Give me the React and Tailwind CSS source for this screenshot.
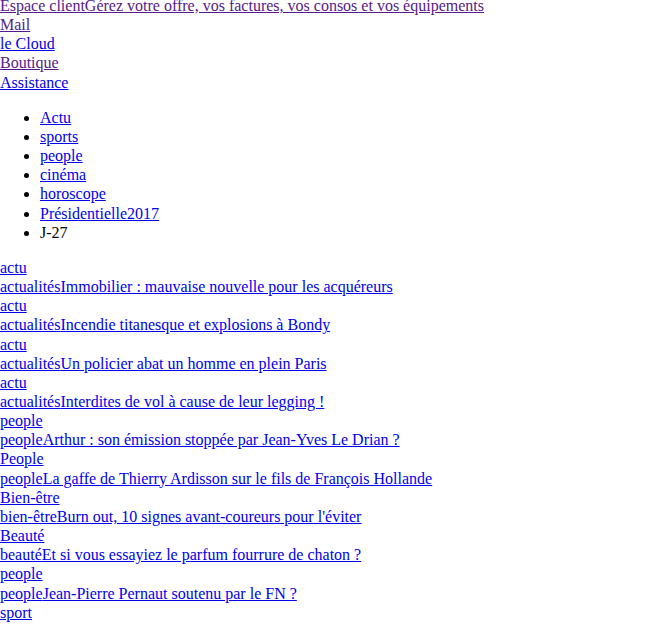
import React from 'react';

const visited = "text-[#551a8b]";
const link = "text-[#0000ee]";

const topLinks = [
  { label: "Mail", seen: true },
  { label: "le Cloud", seen: false },
  { label: "Boutique", seen: true },
  { label: "Assistance", seen: false },
];

const rubriques = ["Actu", "sports", "people", "cinéma", "horoscope", "Présidentielle2017"];

const articles = [
  ["actu", "actualités", "Immobilier : mauvaise nouvelle pour les acquéreurs"],
  ["actu", "actualités", "Incendie titanesque et explosions à Bondy"],
  ["actu", "actualités", "Un policier abat un homme en plein Paris"],
  ["actu", "actualités", "Interdites de vol à cause de leur legging !"],
  ["people", "people", "Arthur : son émission stoppée par Jean-Yves Le Drian ?"],
  ["People", "people", "La gaffe de Thierry Ardisson sur le fils de François Hollande"],
  ["Bien-être", "bien-être", "Burn out, 10 signes avant-coureurs pour l'éviter"],
  ["Beauté", "beauté", "Et si vous essayiez le parfum fourrure de chaton ?"],
  ["people", "people", "Jean-Pierre Pernaut soutenu par le FN ?"],
];

const App = () => {
  return (
    <div className="h-[625px] overflow-hidden bg-white text-black font-['Liberation_Serif','Times_New_Roman',serif] text-[16px] leading-[19.15px]">
      <div className="-mt-[4px]">
        {/* barre du haut */}
        <div>
          <a href="#" className={`underline ${visited}`}>
            Espace clientGérez votre offre, vos factures, vos consos et vos équipements
          </a>
        </div>
        {topLinks.map((l) => (
          <div key={l.label}>
            <a href="#" className={`underline ${l.seen ? visited : link}`}>{l.label}</a>
          </div>
        ))}

        {/* rubriques */}
        <ul className="my-4 pl-10 list-disc">
          {rubriques.map((r) => (
            <li key={r}>
              <a href="#" className={`underline ${link}`}>{r}</a>
            </li>
          ))}
          <li>J-27</li>
        </ul>

        {/* articles */}
        {articles.map(([rub, tag, title], i) => (
          <div key={i}>
            <div>
              <a href="#" className={`underline ${link}`}>{rub}</a>
            </div>
            <div>
              <a href="#" className={`underline ${link}`}>{tag}{title}</a>
            </div>
          </div>
        ))}
        <div>
          <a href="#" className={`underline ${link}`}>sport</a>
        </div>
      </div>
    </div>
  );
};

export default App;
